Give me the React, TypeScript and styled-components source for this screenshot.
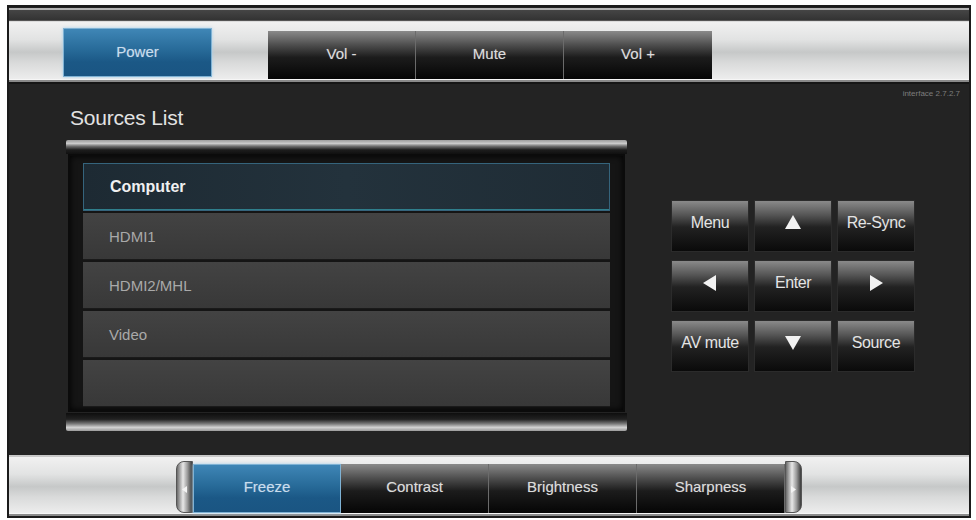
import React, { useState } from 'react';
import styled, { createGlobalStyle, css } from 'styled-components';

const GlobalStyle = createGlobalStyle`
  html, body {
    margin: 0;
    padding: 0;
    background: #ffffff;
  }
  body {
    font-family: "Liberation Sans", Arial, sans-serif;
  }
`;

const sources = ['Computer', 'HDMI1', 'HDMI2/MHL', 'Video', ''];
const volumeKeys = ['Vol -', 'Mute', 'Vol +'];
const pictureKeys = ['Freeze', 'Contrast', 'Brightness', 'Sharpness'];

type NavKey = { label?: string; arrow?: 'up' | 'down' | 'left' | 'right' };
const navKeys: NavKey[] = [
  { label: 'Menu' },
  { arrow: 'up' },
  { label: 'Re-Sync' },
  { arrow: 'left' },
  { label: 'Enter' },
  { arrow: 'right' },
  { label: 'AV mute' },
  { arrow: 'down' },
  { label: 'Source' },
];

const arrowPaths = {
  up: 'M9 1 L17 15 L1 15 Z',
  down: 'M1 2 L17 2 L9 16 Z',
  left: 'M2 9 L15 1 L15 17 Z',
  right: 'M3 1 L16 9 L3 17 Z',
};

const Arrow = ({ dir }: { dir: keyof typeof arrowPaths }) => (
  <svg width="18" height="18" viewBox="0 0 18 18">
    <path d={arrowPaths[dir]} fill="#f2f2f2" />
  </svg>
);

const Caret = ({ dir }: { dir: 'left' | 'right' }) => (
  <svg width="5" height="7" viewBox="0 0 5 7">
    <path d={dir === 'left' ? 'M0 3.5 L5 0 L5 7 Z' : 'M5 3.5 L0 0 L0 7 Z'} fill="#f4f4f4" />
  </svg>
);

export default function App() {
  const [source, setSource] = useState(0);
  const [picture, setPicture] = useState(0);

  return (
    <>
      <GlobalStyle />
      <Frame>
        <TopStrip />
        <SilverBar>
          <TopRow>
            <KeyButton blue wide onClick={() => undefined}>
              Power
            </KeyButton>
            <KeyGroup>
              {volumeKeys.map(k => (
                <KeyButton key={k}>{k}</KeyButton>
              ))}
            </KeyGroup>
          </TopRow>
        </SilverBar>

        <Main>
          <SourcesColumn>
            <Title>Sources List</Title>
            <ListCapTop />
            <ListBox>
              {sources.map((s, i) => (
                <SourceRow key={i} active={i === source} onClick={() => s && setSource(i)}>
                  {s}
                </SourceRow>
              ))}
            </ListBox>
            <ListCapBottom />
          </SourcesColumn>

          <RemoteColumn>
            <Version>interface 2.7.2.7</Version>
            <NavGrid>
              {navKeys.map((k, i) => (
                <NavButton key={i}>{k.arrow ? <Arrow dir={k.arrow} /> : k.label}</NavButton>
              ))}
            </NavGrid>
          </RemoteColumn>
        </Main>

        <SilverBar bottom>
          <TabStrip>
            <EndCap side="left">
              <Caret dir="left" />
            </EndCap>
            {pictureKeys.map((k, i) => (
              <KeyButton key={k} blue={i === picture} onClick={() => setPicture(i)}>
                {k}
              </KeyButton>
            ))}
            <EndCap side="right">
              <Caret dir="right" />
            </EndCap>
          </TabStrip>
        </SilverBar>
      </Frame>
    </>
  );
}

const Frame = styled.div`
  width: 960px;
  height: 509px;
  margin: 5px 0 0 7px;
  border: 2px solid #1b1b1b;
  background: #232323;
  display: flex;
  flex-direction: column;
  overflow: hidden;
`;

const TopStrip = styled.div`
  height: 10px;
  margin-top: 1px;
  border-top: 2px solid #b4b4b4;
  border-bottom: 1px solid #555;
  background: linear-gradient(#454545, #333);
`;

const SilverBar = styled.div<{ bottom?: boolean }>`
  height: ${p => (p.bottom ? '57px' : '58px')};
  background: linear-gradient(
    #f1f1f1 0%,
    #e2e3e3 30%,
    #c6c8c8 52%,
    #d9dada 70%,
    #eeeeee 100%
  );
  border-top: 1px solid #dcdcdc;
  border-bottom: 2px solid #8a8a8a;
  box-shadow: inset 0 -1px 0 #f6f6f6;
  ${p =>
    p.bottom &&
    css`
      border-top: 2px solid #c8c8c8;
      margin-top: 1px;
    `}
`;

const TopRow = styled.div`
  display: flex;
  align-items: flex-end;
  gap: 56px;
  padding: 6px 0 0 54px;
`;

const KeyGroup = styled.div`
  display: flex;
  padding-top: 2px;
`;

const KeyButton = styled.button<{ blue?: boolean; wide?: boolean }>`
  width: ${p => (p.wide ? '149px' : '148px')};
  height: 48px;
  padding: 0 0 4px;
  border: none;
  border-right: 1px solid #6b6b6b;
  font-family: "Liberation Sans", Arial, sans-serif;
  font-size: 15px;
  color: #dcdcdc;
  text-shadow: 0 0 1px rgba(255, 255, 255, 0.35);
  cursor: pointer;
  background: linear-gradient(
    #8a8a8a 0%,
    #4c4c4c 30%,
    #1c1c1c 55%,
    #050505 100%
  );
  &:last-child {
    border-right: none;
  }
  ${p =>
    p.blue &&
    css`
      color: #c9dced;
      border: 1px solid #7fb2d4;
      box-shadow: 0 0 3px #a8d1ec;
      background: linear-gradient(#3f86b6 0%, #276a98 45%, #1b5886 70%, #1a5582 100%);
    `}
  ${p =>
    p.wide &&
    css`
      height: 49px;
      margin-bottom: 2px;
      padding-top: 2px;
    `}
`;

const Main = styled.div`
  flex: 1;
  display: flex;
  background: #232323;
  border-top: 2px solid #161616;
`;

const SourcesColumn = styled.div`
  width: 561px;
  padding: 22px 0 0 57px;
  display: flex;
  flex-direction: column;
`;

const Title = styled.div`
  font-size: 21px;
  color: #e2e2e2;
  padding-left: 4px;
  height: 34px;
  letter-spacing: -0.2px;
`;

const ListCapTop = styled.div`
  height: 14px;
  border-radius: 2px 2px 0 0;
  background: linear-gradient(#9c9c9c 0%, #c9c9c9 25%, #6d6d6d 45%, #1d1d1d 70%, #101010 100%);
`;

const ListBox = styled.div`
  margin: 0 2px;
  padding: 7px 13px 4px;
  height: 243px;
  background: #151515;
  border: 2px solid #0b0b0b;
  box-shadow: inset 0 0 6px #000;
  display: flex;
  flex-direction: column;
  gap: 2px;
`;

const SourceRow = styled.div<{ active?: boolean }>`
  height: 46px;
  flex: none;
  display: flex;
  align-items: center;
  padding-left: 26px;
  font-size: 15px;
  color: #a9a9a9;
  background: linear-gradient(#434343, #383838);
  border-bottom: 1px solid #1a1a1a;
  ${p =>
    p.active &&
    css`
      font-weight: bold;
      font-size: 16px;
      color: #f0f0f0;
      background: linear-gradient(90deg, #1d2a33, #23323c 50%, #1f2c35);
      border: 1px solid #35647c;
      box-shadow: inset 0 -1px 0 #2f7f8c;
    `}
`;

const ListCapBottom = styled.div`
  height: 18px;
  margin-top: 1px;
  border-radius: 0 0 2px 2px;
  background: linear-gradient(#0e0e0e 0%, #222 35%, #7a7a7a 60%, #d2d2d2 80%, #9a9a9a 100%);
`;

const RemoteColumn = styled.div`
  flex: 1;
  display: flex;
  flex-direction: column;
  padding: 5px 9px 0 44px;
`;

const Version = styled.div`
  align-self: flex-end;
  font-size: 8px;
  color: #7d7d7d;
  height: 111px;
`;

const NavGrid = styled.div`
  display: grid;
  grid-template-columns: repeat(3, 78px);
  grid-auto-rows: 52px;
  column-gap: 5px;
  row-gap: 8px;
`;

const NavButton = styled.button`
  display: flex;
  align-items: center;
  justify-content: center;
  padding: 0 0 6px;
  border: 1px solid #2b2b2b;
  font-family: "Liberation Sans", Arial, sans-serif;
  font-size: 16px;
  letter-spacing: -0.4px;
  white-space: nowrap;
  color: #e4e4e4;
  cursor: pointer;
  background: linear-gradient(#8a8a8a 0%, #555 28%, #222 52%, #0a0a0a 100%);
`;

const TabStrip = styled.div`
  display: flex;
  align-items: flex-end;
  padding: 4px 0 0 167px;
  & > button {
    height: 49px;
  }
`;

const EndCap = styled.div<{ side: 'left' | 'right' }>`
  width: 17px;
  height: 52px;
  display: flex;
  align-items: center;
  justify-content: center;
  padding-top: 4px;
  box-sizing: border-box;
  background: linear-gradient(90deg, #6a6a6a, #e8e8e8 40%, #9a9a9a 70%, #3a3a3a);
  border: 1px solid #555;
  border-radius: ${p => (p.side === 'left' ? '8px 0 0 8px' : '0 8px 8px 0')};
`;
